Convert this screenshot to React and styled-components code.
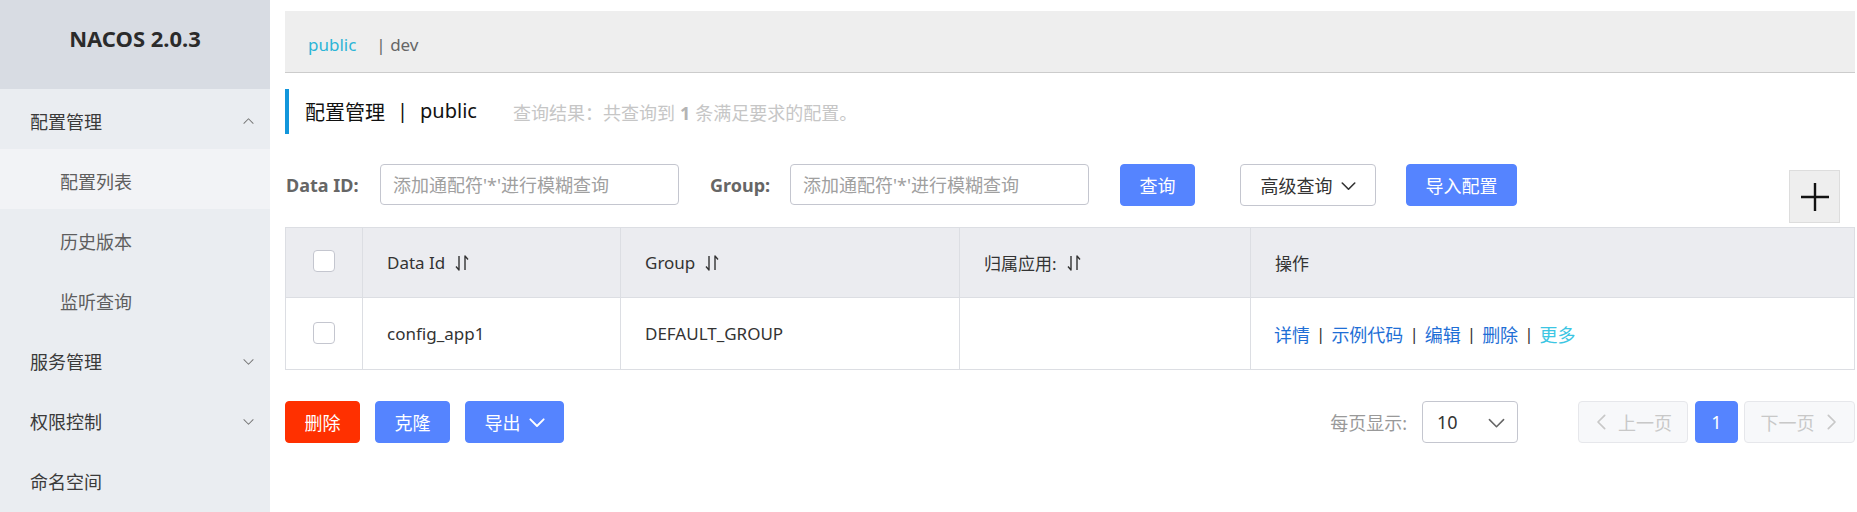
import React from "react";
import styled, { createGlobalStyle } from "styled-components";

const Global = createGlobalStyle`
  html, body { margin: 0; padding: 0; background: #fff; }
  body { font-family: "Noto Sans", "Noto Sans CJK SC", sans-serif; color: #333; }
  * { box-sizing: border-box; }
`;

const Layout = styled.div`
  display: flex;
  min-height: 512px;
  width: 1857px;
`;

const Sidebar = styled.aside`
  width: 270px;
  flex: none;
  background: #eaedf1;
  display: flex;
  flex-direction: column;
`;

const Brand = styled.div`
  height: 89px;
  background: #d8dce3;
  display: flex;
  align-items: center;
  justify-content: center;
  font-weight: 700;
  font-size: 22px;
  color: #2b2b2b;
  padding-bottom: 14px;
`;

const MenuItem = styled.div`
  height: 60px;
  display: flex;
  align-items: center;
  justify-content: space-between;
  padding: 5px 16px 0 ${(p) => (p.$sub ? 60 : 30)}px;
  font-size: 18px;
  line-height: 1;
  color: ${(p) => (p.$sub ? "#5e5e5e" : "#3a3a3a")};
  background: ${(p) => (p.$active ? "#f2f3f6" : "transparent")};
`;

const Main = styled.main`
  flex: 1;
  padding: 11px 2px 0 15px;
  display: flex;
  flex-direction: column;
  min-width: 0;
`;

const NsBar = styled.div`
  height: 62px;
  background: #eeeeee;
  border-bottom: 1px solid #cccccc;
  display: flex;
  align-items: center;
  padding: 5px 0 0 23px;
  font-size: 17px;
`;

const NsActive = styled.span`
  color: #2cb5d7;
  margin-right: 20px;
`;

const NsItem = styled.span`
  color: #666;
`;

const TitleRow = styled.div`
  margin-top: 16px;
  height: 45px;
  border-left: 4px solid #1296db;
  padding-left: 16px;
  display: flex;
  align-items: center;
`;

const Title = styled.span`
  font-size: 20px;
  color: #111;
  display: flex;
  gap: 12px;
`;

const ResultText = styled.span`
  margin-left: 36px;
  font-size: 18px;
  color: #c6c6c6;
  b { color: #b4b4b4; margin: 0 5px; }
`;

const SearchRow = styled.div`
  margin-top: 30px;
  height: 59px;
  display: flex;
  align-items: flex-start;
`;

const Label = styled.label`
  height: 41px;
  display: flex;
  align-items: center;
  font-size: 18px;
  font-weight: 700;
  color: #666;
  margin-left: ${(p) => p.$ml || 0}px;
  width: ${(p) => p.$w}px;
`;

const Input = styled.input`
  width: 299px;
  height: 41px;
  border: 1px solid #c4c6cf;
  border-radius: 4px;
  padding: 0 12px;
  font-family: inherit;
  font-size: 18px;
  color: #333;
  outline: none;
  &::placeholder { color: #a0a0a0; }
`;

const Button = styled.button`
  height: ${(p) => p.$h || 42}px;
  width: ${(p) => p.$w}px;
  margin-left: ${(p) => p.$ml || 0}px;
  border-radius: 4px;
  font-family: inherit;
  font-size: 18px;
  display: inline-flex;
  align-items: center;
  justify-content: center;
  gap: 8px;
  padding: 0;
  cursor: pointer;
  border: 1px solid
    ${(p) => (p.$kind === "danger" ? "#ff3000" : p.$kind === "normal" ? "#c4c6cf" : "#5584ff")};
  background: ${(p) => (p.$kind === "danger" ? "#ff3000" : p.$kind === "normal" ? "#fff" : "#5584ff")};
  color: ${(p) => (p.$kind === "normal" ? "#333" : "#fff")};
`;

const PlusButton = styled.button`
  margin-left: auto;
  margin-right: 15px;
  margin-top: 6px;
  width: 51px;
  height: 53px;
  background: #eeeeee;
  border: 1px solid #dddddd;
  display: flex;
  align-items: center;
  justify-content: center;
  padding: 0;
`;

const Table = styled.div`
  margin-top: 4px;
  border: 1px solid #dcdee3;
  display: grid;
  grid-template-columns: 76px 258px 339px 291px 1fr;
`;

const Cell = styled.div`
  height: ${(p) => (p.$head ? 70 : 71)}px;
  display: flex;
  align-items: center;
  justify-content: ${(p) => (p.$center ? "center" : "flex-start")};
  padding: 0 ${(p) => (p.$center ? 0 : 24)}px;
  font-size: 17px;
  color: #333;
  background: ${(p) => (p.$head ? "#ebecf0" : "#fff")};
  border-left: ${(p) => (p.$first ? "none" : "1px solid #dcdee3")};
  border-bottom: ${(p) => (p.$head ? "1px solid #dcdee3" : "none")};
  gap: 10px;
`;

const Check = styled.span`
  width: 22px;
  height: 22px;
  border: 1px solid #c4c6cf;
  border-radius: 4px;
  background: #fff;
  margin-top: ${(p) => (p.$head ? -4 : -2)}px;
`;

const Actions = styled.div`
  display: flex;
  align-items: center;
  gap: 6px;
  font-size: 18px;
  margin-left: -1px;
`;

const Link = styled.a`
  color: ${(p) => (p.$light ? "#3cc6e3" : "#1f6fd6")};
  text-decoration: none;
  cursor: pointer;
`;

const Sep = styled.span`
  color: #333;
  font-size: 17px;
`;

const BottomRow = styled.div`
  margin-top: 31px;
  display: flex;
  align-items: center;
  justify-content: space-between;
`;

const Group = styled.div`
  display: flex;
  align-items: center;
`;

const PageLabel = styled.span`
  font-size: 18px;
  color: #999;
  margin-right: 15px;
`;

const Select = styled.div`
  width: 96px;
  height: 42px;
  border: 1px solid #c4c6cf;
  border-radius: 4px;
  display: flex;
  align-items: center;
  justify-content: space-between;
  padding: 0 12px 0 14px;
  font-size: 18px;
  color: #333;
`;

const PageBtn = styled.div`
  width: ${(p) => p.$w}px;
  height: 42px;
  margin-left: ${(p) => p.$ml || 0}px;
  border-radius: 4px;
  display: flex;
  align-items: center;
  justify-content: center;
  gap: 8px;
  font-size: 18px;
  background: ${(p) => (p.$current ? "#5584ff" : "#f7f8fa")};
  border: 1px solid ${(p) => (p.$current ? "#5584ff" : "#e6e7eb")};
  color: ${(p) => (p.$current ? "#fff" : "#c8c8c8")};
`;

const Chevron = ({ dir = "down", size = 12, color = "#888", sw = 1.2 }) => {
  const paths = {
    down: "M1 4 L6 9 L11 4",
    up: "M1 8 L6 3 L11 8",
    left: "M8 1 L3 6 L8 11",
    right: "M4 1 L9 6 L4 11",
  };
  return (
    <svg width={size} height={size} viewBox="0 0 12 12" fill="none">
      <path d={paths[dir]} stroke={color} strokeWidth={sw} strokeLinecap="round" strokeLinejoin="round" />
    </svg>
  );
};

const SortIcon = () => (
  <svg width="14" height="18" viewBox="0 0 14 18" fill="none">
    <path d="M4 2 V16 L1 12.5" stroke="#333" strokeWidth="1.4" strokeLinejoin="round" />
    <path d="M10 16 V2 L13 5.5" stroke="#333" strokeWidth="1.4" strokeLinejoin="round" />
  </svg>
);

const Plus = () => (
  <svg width="30" height="30" viewBox="0 0 30 30">
    <path d="M15 1 V29 M1 15 H29" stroke="#111" strokeWidth="2.4" />
  </svg>
);

export default function App() {
  return (
    <>
      <Global />
      <Layout>
        <Sidebar>
          <Brand>NACOS 2.0.3</Brand>
          <MenuItem>
            配置管理 <Chevron dir="up" size={11} color="#777" sw={1.1} />
          </MenuItem>
          <MenuItem $sub $active>配置列表</MenuItem>
          <MenuItem $sub>历史版本</MenuItem>
          <MenuItem $sub>监听查询</MenuItem>
          <MenuItem>
            服务管理 <Chevron dir="down" size={11} color="#777" sw={1.1} />
          </MenuItem>
          <MenuItem>
            权限控制 <Chevron dir="down" size={11} color="#777" sw={1.1} />
          </MenuItem>
          <MenuItem>命名空间</MenuItem>
        </Sidebar>
        <Main>
          <NsBar>
            <NsActive>public</NsActive>
            <NsItem>| dev</NsItem>
          </NsBar>
          <TitleRow>
            <Title>
              <span>配置管理</span>
              <span>|</span>
              <span>public</span>
            </Title>
            <ResultText>
              查询结果：共查询到<b>1</b>条满足要求的配置。
            </ResultText>
          </TitleRow>
          <SearchRow>
            <Label $ml={1} $w={94}>Data ID:</Label>
            <Input placeholder="添加通配符'*'进行模糊查询" />
            <Label $ml={31} $w={80}>Group:</Label>
            <Input placeholder="添加通配符'*'进行模糊查询" />
            <Button $w={75} $ml={31}>查询</Button>
            <Button $w={136} $ml={45} $kind="normal">
              高级查询 <Chevron dir="down" size={15} color="#333" sw={1.3} />
            </Button>
            <Button $w={111} $ml={30}>导入配置</Button>
            <PlusButton>
              <Plus />
            </PlusButton>
          </SearchRow>
          <Table>
            <Cell $head $first $center>
              <Check $head />
            </Cell>
            <Cell $head>
              Data Id <SortIcon />
            </Cell>
            <Cell $head>
              Group <SortIcon />
            </Cell>
            <Cell $head>
              归属应用: <SortIcon />
            </Cell>
            <Cell $head>操作</Cell>
            <Cell $first $center>
              <Check />
            </Cell>
            <Cell>config_app1</Cell>
            <Cell>DEFAULT_GROUP</Cell>
            <Cell />
            <Cell>
              <Actions>
                <Link>详情</Link>
                <Sep>|</Sep>
                <Link>示例代码</Link>
                <Sep>|</Sep>
                <Link>编辑</Link>
                <Sep>|</Sep>
                <Link>删除</Link>
                <Sep>|</Sep>
                <Link $light>更多</Link>
              </Actions>
            </Cell>
          </Table>
          <BottomRow>
            <Group>
              <Button $w={75} $kind="danger">删除</Button>
              <Button $w={75} $ml={15}>克隆</Button>
              <Button $w={99} $ml={15}>
                导出 <Chevron dir="down" size={16} color="#fff" sw={1.4} />
              </Button>
            </Group>
            <Group>
              <PageLabel>每页显示:</PageLabel>
              <Select>
                10 <Chevron dir="down" size={17} color="#666" sw={1.1} />
              </Select>
              <PageBtn $w={110} $ml={60}>
                <Chevron dir="left" size={16} color="#c8c8c8" sw={1.3} /> 上一页
              </PageBtn>
              <PageBtn $w={43} $ml={7} $current>1</PageBtn>
              <PageBtn $w={111} $ml={6}>
                下一页 <Chevron dir="right" size={16} color="#c8c8c8" sw={1.3} />
              </PageBtn>
            </Group>
          </BottomRow>
        </Main>
      </Layout>
    </>
  );
}
